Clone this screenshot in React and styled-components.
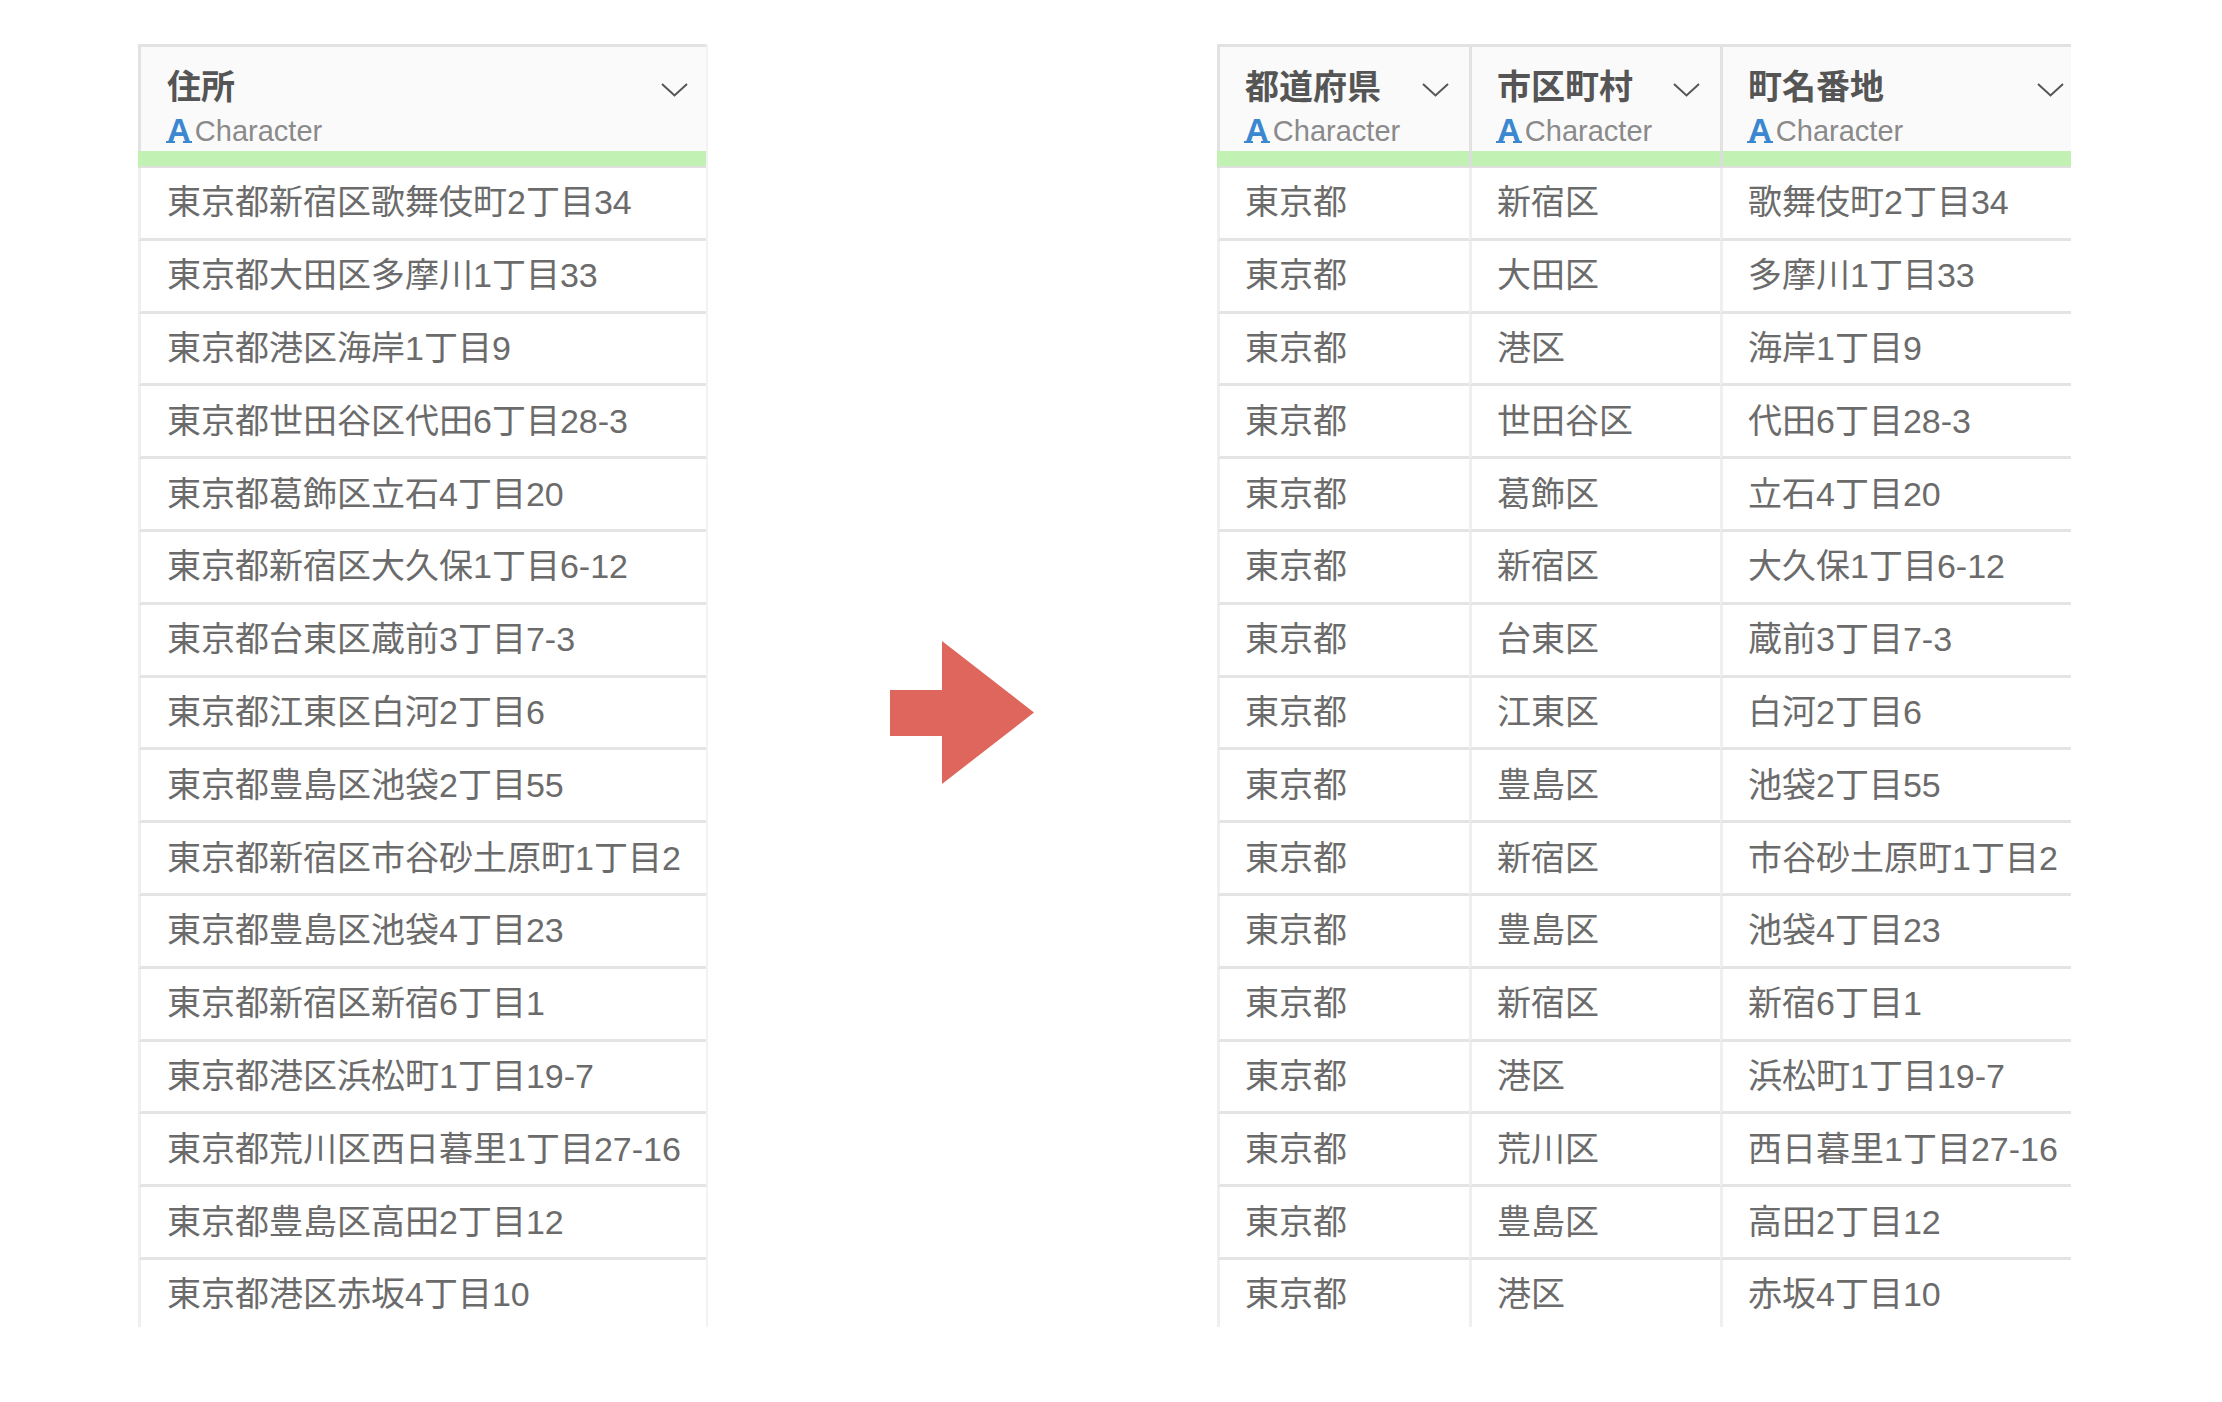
import React from 'react';
import styled, { createGlobalStyle } from 'styled-components';

const rows = [
    ['東京都', '新宿区', '歌舞伎町2丁目34'],
    ['東京都', '大田区', '多摩川1丁目33'],
    ['東京都', '港区', '海岸1丁目9'],
    ['東京都', '世田谷区', '代田6丁目28-3'],
    ['東京都', '葛飾区', '立石4丁目20'],
    ['東京都', '新宿区', '大久保1丁目6-12'],
    ['東京都', '台東区', '蔵前3丁目7-3'],
    ['東京都', '江東区', '白河2丁目6'],
    ['東京都', '豊島区', '池袋2丁目55'],
    ['東京都', '新宿区', '市谷砂土原町1丁目2'],
    ['東京都', '豊島区', '池袋4丁目23'],
    ['東京都', '新宿区', '新宿6丁目1'],
    ['東京都', '港区', '浜松町1丁目19-7'],
    ['東京都', '荒川区', '西日暮里1丁目27-16'],
    ['東京都', '豊島区', '高田2丁目12'],
    ['東京都', '港区', '赤坂4丁目10'],
];

const sourceColumns = [
    { title: '住所', width: 570, values: rows.map((r) => r.join('')) },
];

const splitColumns = [
    { title: '都道府県', width: 252, values: rows.map((r) => r[0]) },
    { title: '市区町村', width: 251, values: rows.map((r) => r[1]) },
    { title: '町名番地', width: 364, values: rows.map((r) => r[2]) },
];

function Chevron() {
    return (
        <ChevronIcon viewBox="0 0 27 14" fill="none" stroke="#555" strokeWidth="2">
            <polyline points="1,1 13.5,12.5 26,1" />
        </ChevronIcon>
    );
}

function DataTable({ columns, width, inset, closed }) {
    return (
        <Table $width={width} $closed={closed}>
            {columns.map((col, i) => (
                <Column key={col.title} $width={col.width}>
                    <HeaderBody $inset={inset}>
                        <TitleRow>
                            <Title>{col.title}</Title>
                            <Chevron />
                        </TitleRow>
                        <TypeRow>
                            <TypeBadge>A</TypeBadge>
                            Character
                        </TypeRow>
                    </HeaderBody>
                    <QualityBar $bleed={i === 0} />
                    {col.values.map((value, j) => (
                        <Cell key={j} $inset={inset}>{value}</Cell>
                    ))}
                </Column>
            ))}
        </Table>
    );
}

export default function App() {
    return (
        <Page>
            <GlobalStyle />
            <DataTable columns={sourceColumns} width={570} inset={26} closed />
            <ArrowSlot>
                <svg width="144" height="143" viewBox="0 0 144 143">
                    <polygon points="0,49 52,49 52,0 144,71.5 52,143 52,95 0,95" fill="#de665c" />
                </svg>
            </ArrowSlot>
            <DataTable columns={splitColumns} width={854} inset={25} />
        </Page>
    );
}

const GlobalStyle = createGlobalStyle`
    html, body {
        margin: 0;
        background: #fff;
    }
`;

const Page = styled.div`
    width: 2222px;
    height: 1402px;
    box-sizing: border-box;
    padding: 44px 0 0 138px;
    display: flex;
    align-items: flex-start;
    overflow: hidden;
    font-family: "Liberation Sans", "Noto Sans CJK JP", sans-serif;
`;

const Table = styled.div`
    width: ${({ $width }) => $width}px;
    height: 1283px;
    display: flex;
    overflow: hidden;
    flex-shrink: 0;
    box-sizing: border-box;
    border-right: ${({ $closed }) => ($closed ? '2px solid #f2f2f2' : 'none')};
`;

const Column = styled.div`
    width: ${({ $width }) => $width}px;
    flex-shrink: 0;
    display: flex;
    flex-direction: column;
`;

const HeaderBody = styled.div`
    height: 107px;
    flex-shrink: 0;
    box-sizing: border-box;
    padding: 0 20px 0 ${({ $inset }) => $inset}px;
    background: #fafafa;
    border-top: 3px solid #e2e2e2;
    border-left: 3px solid #e2e2e2;
`;

const TitleRow = styled.div`
    height: 67px;
    padding-top: 8px;
    box-sizing: border-box;
    display: flex;
    align-items: center;
    justify-content: space-between;
`;

const Title = styled.div`
    font-size: 34px;
    font-weight: 700;
    color: #555;
`;

const ChevronIcon = styled.svg`
    width: 27px;
    height: 14px;
    flex-shrink: 0;
    margin-top: 10px;
`;

const TypeRow = styled.div`
    display: flex;
    align-items: center;
    height: 34px;
    font-size: 29px;
    color: #8a8a8a;
`;

const TypeBadge = styled.span`
    position: relative;
    display: inline-block;
    height: 24px;
    line-height: 24px;
    font-weight: 700;
    font-size: 33px;
    color: #3b88d0;
    margin-right: 4px;

    &::before,
    &::after {
        content: '';
        position: absolute;
        bottom: 0;
        width: 9px;
        height: 2px;
        background: #3b88d0;
    }

    &::before {
        left: -1px;
    }

    &::after {
        right: -1px;
    }
`;

const QualityBar = styled.div`
    height: 17px;
    flex-shrink: 0;
    box-sizing: border-box;
    background: #c1f2b4;
    border-left: 3px solid ${({ $bleed }) => ($bleed ? '#c1f2b4' : '#dcdcdc')};
    border-bottom: 2px solid #e0e0e0;
`;

const Cell = styled.div`
    height: 72.8px;
    flex-shrink: 0;
    box-sizing: border-box;
    display: flex;
    align-items: center;
    padding: 0 0 6px ${({ $inset }) => $inset}px;
    white-space: nowrap;
    font-size: 34px;
    color: #6b6b6b;
    border-left: 3px solid #efefef;
    border-bottom: 3px solid #e4e4e4;
`;

const ArrowSlot = styled.div`
    flex-shrink: 0;
    margin: 597px 183px 0 182px;
    display: flex;
`;
